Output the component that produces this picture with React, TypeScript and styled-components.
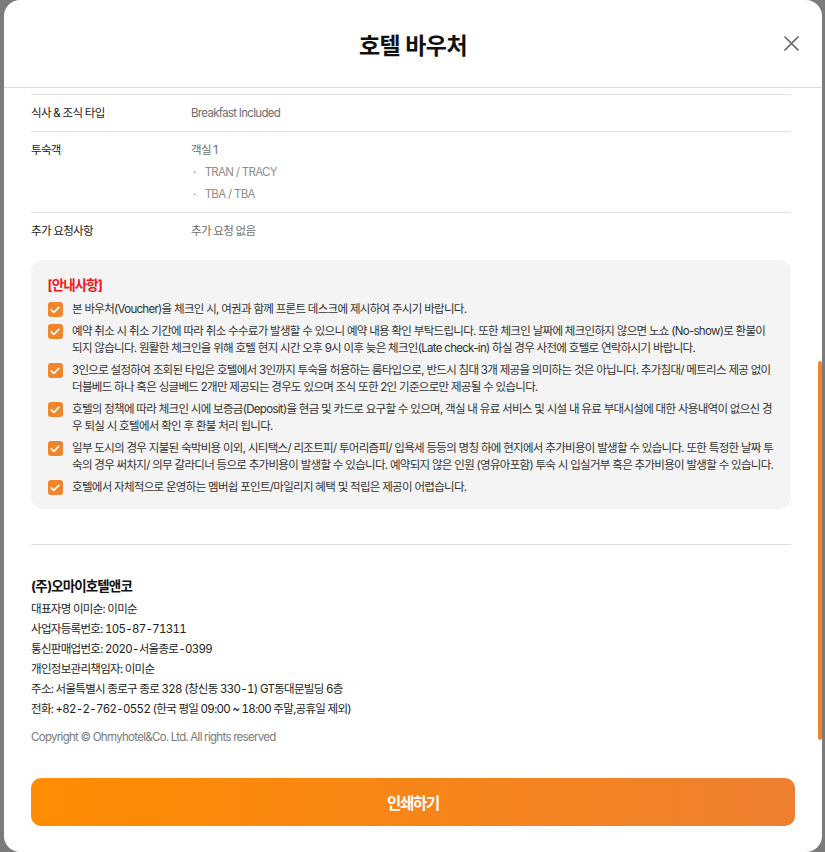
import React, { useLayoutEffect, useRef, useState } from "react";
import styled, { createGlobalStyle } from "styled-components";

const GlobalStyle = createGlobalStyle`
  html, body {
    margin: 0;
    padding: 0;
    height: 100%;
    overflow: hidden;
    background: #7b7b7b;
    font-family: "Inter", "Noto Sans CJK KR", sans-serif;
    letter-spacing: -0.7px;
  }
  #root {
    height: 100%;
  }
  * {
    box-sizing: border-box;
  }
`;

const Backdrop = styled.div`
  height: 100%;
  display: flex;
  justify-content: center;
`;

const Modal = styled.div`
  position: relative;
  width: 818px;
  height: 852px;
  background: #fff;
  border-radius: 16px;
  display: flex;
  flex-direction: column;
  overflow: hidden;
`;

const Header = styled.header`
  height: 88px;
  flex-shrink: 0;
  display: grid;
  grid-template-columns: 1fr auto 1fr;
  align-items: center;
  padding: 0 23px 0 24px;
  border-bottom: 1px solid #dcdcdc;
`;

const Title = styled.h1`
  grid-column: 2;
  margin: 0;
  font-size: 23px;
  font-weight: 700;
  letter-spacing: -0.5px;
  color: #111;
`;

const CloseButton = styled.button`
  justify-self: end;
  width: 15px;
  height: 15px;
  padding: 0;
  border: none;
  background: none;
  cursor: pointer;
  display: flex;

  svg {
    width: 15px;
    height: 15px;
  }
`;

const Scroll = styled.div`
  flex: 1;
  position: relative;
  overflow-y: scroll;
  padding: 0 30.5px 48px 27.5px;

  &::-webkit-scrollbar {
    width: 0;
  }
`;

const ScrollThumb = styled.div`
  position: absolute;
  right: 0;
  width: 4px;
  border-radius: 2px;
  background: #f0852c;
`;

const SectionTitle = styled.h2`
  margin: 24px 0 14px;
  font-size: 15px;
  line-height: 22px;
  font-weight: 700;
  color: #111;
`;

const Row = styled.div`
  display: flex;
  border-top: 1px solid #e2e2e2;
  padding: 10px 0;
  font-size: 11.5px;
  line-height: 16px;
`;

const Label = styled.div`
  width: 160px;
  flex-shrink: 0;
  color: #222;
`;

const Value = styled.div`
  color: #6e6e6e;
  display: flex;
  flex-direction: column;
  gap: 6px;
`;

const Guest = styled.div`
  display: flex;
  gap: 9px;
  color: #8e8e8e;
  padding-left: 2px;
`;

const InfoBox = styled.section`
  margin-top: 11px;
  background: #f4f4f4;
  border-radius: 12px;
  padding: 16px 17px 13px 16.5px;
`;

const InfoTitle = styled.h3`
  margin: 0 0 7px;
  font-size: 13.5px;
  line-height: 18px;
  font-weight: 700;
  color: #f2141c;
  letter-spacing: -0.9px;
`;

const InfoList = styled.ul`
  list-style: none;
  margin: 0;
  padding: 0;
  display: flex;
  flex-direction: column;
  gap: 5px;
`;

const InfoItem = styled.li`
  display: flex;
  gap: 9.5px;
  font-size: 11.5px;
  line-height: 17px;
  color: #333;
`;

const CheckMark = styled.span`
  flex-shrink: 0;
  width: 15px;
  height: 15px;
  margin-top: 1px;
  border-radius: 3px;
  background: #f0852c;
  display: flex;
  align-items: center;
  justify-content: center;
`;

const Divider = styled.hr`
  margin: 35px 0 0;
  border: none;
  border-top: 1px solid #dedede;
`;

const Company = styled.div`
  margin-top: 31px;
  font-size: 11.5px;
  line-height: 20px;
  color: #222;
  font-variant-numeric: tabular-nums;
`;

const CompanyName = styled.div`
  font-size: 13.5px;
  font-weight: 700;
  color: #111;
  letter-spacing: -0.9px;
  margin-bottom: 3px;
`;

const Copyright = styled.div`
  margin-top: 8px;
  color: #7a7a7a;
`;

const Footer = styled.footer`
  flex-shrink: 0;
  padding: 18px 26.5px 26px 27.5px;
`;

const PrintButton = styled.button`
  width: 100%;
  height: 48px;
  border: none;
  border-radius: 10px;
  background: linear-gradient(90deg, #ff8c00 0%, #ee7f30 100%);
  color: #fff;
  font-family: inherit;
  font-size: 15.5px;
  font-weight: 700;
  letter-spacing: -1.2px;
  cursor: pointer;
`;

const bookingRows: [string, string][] = [
  ["예약번호", "OMH240512-001873"],
  ["예약일", "2024-05-12"],
  ["호텔명", "Hotel Nikko Saigon"],
  ["체크인", "2024-06-14 (금) 14:00"],
  ["체크아웃", "2024-06-17 (월) 12:00"],
  ["숙박일수", "3박"],
  ["객실 수", "1"],
  ["객실 타입", "Deluxe Double Room"],
  ["전화번호", "+84-28-3925-7777"],
  ["결제 상태", "결제 완료"],
];

const notices = [
  "본 바우처(Voucher)을 체크인 시, 여권과 함께 프론트 데스크에 제시하여 주시기 바랍니다.",
  "예약 취소 시 취소 기간에 따라 취소 수수료가 발생할 수 있으니 예약 내용 확인 부탁드립니다. 또한 체크인 날짜에 체크인하지 않으면 노쇼 (No-show)로 환불이 되지 않습니다. 원활한 체크인을 위해 호텔 현지 시간 오후 9시 이후 늦은 체크인(Late check-in) 하실 경우 사전에 호텔로 연락하시기 바랍니다.",
  "3인으로 설정하여 조회된 타입은 호텔에서 3인까지 투숙을 허용하는 룸타입으로, 반드시 침대 3개 제공을 의미하는 것은 아닙니다. 추가침대/ 메트리스 제공 없이 더블베드 하나 혹은 싱글베드 2개만 제공되는 경우도 있으며 조식 또한 2인 기준으로만 제공될 수 있습니다.",
  "호텔의 정책에 따라 체크인 시에 보증금(Deposit)을 현금 및 카드로 요구할 수 있으며, 객실 내 유료 서비스 및 시설 내 유료 부대시설에 대한 사용내역이 없으신 경우 퇴실 시 호텔에서 확인 후 환불 처리 됩니다.",
  "일부 도시의 경우 지불된 숙박비용 이외, 시티택스/ 리조트피/ 투어리즘피/ 입욕세 등등의 명칭 하에 현지에서 추가비용이 발생할 수 있습니다. 또한 특정한 날짜 투숙의 경우 써차지/ 의무 갈라디너 등으로 추가비용이 발생할 수 있습니다. 예약되지 않은 인원 (영유아포함) 투숙 시 입실거부 혹은 추가비용이 발생할 수 있습니다.",
  "호텔에서 자체적으로 운영하는 멤버쉽 포인트/마일리지 혜택 및 적립은 제공이 어렵습니다.",
];

const companyLines = [
  "대표자명 이미순: 이미순",
  "사업자등록번호: 105-87-71311",
  "통신판매업번호: 2020-서울종로-0399",
  "개인정보관리책임자: 이미순",
  "주소: 서울특별시 종로구 종로 328 (창신동 330-1) GT동대문빌딩 6층",
  "전화: +82-2-762-0552 (한국 평일 09:00 ~ 18:00 주말,공휴일 제외)",
];

function Check() {
  return (
    <svg width="10" height="8" viewBox="0 0 10 8" fill="none">
      <path d="M1.2 3.9 L3.9 6.4 L8.8 1.4" stroke="#fff" strokeWidth="1.6" strokeLinecap="round" strokeLinejoin="round" />
    </svg>
  );
}

export default function App() {
  const scrollRef = useRef<HTMLDivElement>(null);
  const mealRef = useRef<HTMLDivElement>(null);
  const [thumb, setThumb] = useState({ top: 0, height: 0 });

  // 예약 상세가 스크롤된 상태로 열림
  useLayoutEffect(() => {
    const el = scrollRef.current;
    if (!el || !mealRef.current) return;
    el.scrollTop = mealRef.current.offsetTop - 6;
    const ratio = el.clientHeight / el.scrollHeight;
    setThumb({
      top: el.offsetTop + el.scrollTop * ratio,
      height: el.clientHeight * ratio,
    });
  }, []);

  return (
    <>
      <GlobalStyle />
      <Backdrop>
        <Modal>
          <Header>
            <Title>호텔 바우처</Title>
            <CloseButton aria-label="닫기">
              <svg viewBox="0 0 15 15" fill="none">
                <path d="M1 1 L14 14 M14 1 L1 14" stroke="#666" strokeWidth="1.7" strokeLinecap="round" />
              </svg>
            </CloseButton>
          </Header>

          <Scroll ref={scrollRef}>
            <SectionTitle>예약 정보</SectionTitle>
            {bookingRows.map(([label, value]) => (
              <Row key={label}>
                <Label>{label}</Label>
                <Value>{value}</Value>
              </Row>
            ))}
            <Row>
              <Label>주소</Label>
              <Value>
                <div>235 Nguyen Van Cu Street, District 1</div>
                <div>Ho Chi Minh City, Vietnam</div>
              </Value>
            </Row>
            <Row ref={mealRef}>
              <Label>식사 &amp; 조식 타입</Label>
              <Value>Breakfast Included</Value>
            </Row>
            <Row>
              <Label>투숙객</Label>
              <Value>
                <div>객실 1</div>
                <Guest>
                  <span>·</span>
                  <span>TRAN / TRACY</span>
                </Guest>
                <Guest>
                  <span>·</span>
                  <span>TBA / TBA</span>
                </Guest>
              </Value>
            </Row>
            <Row>
              <Label>추가 요청사항</Label>
              <Value>추가 요청 없음</Value>
            </Row>

            <InfoBox>
              <InfoTitle>[안내사항]</InfoTitle>
              <InfoList>
                {notices.map((text) => (
                  <InfoItem key={text}>
                    <CheckMark>
                      <Check />
                    </CheckMark>
                    <span>{text}</span>
                  </InfoItem>
                ))}
              </InfoList>
            </InfoBox>

            <Divider />

            <Company>
              <CompanyName>(주)오마이호텔앤코</CompanyName>
              {companyLines.map((line) => (
                <div key={line}>{line}</div>
              ))}
              <Copyright>Copyright © Ohmyhotel&amp;Co. Ltd. All rights reserved</Copyright>
            </Company>
          </Scroll>

          {thumb.height > 0 && <ScrollThumb style={{ top: thumb.top, height: thumb.height }} />}

          <Footer>
            <PrintButton>인쇄하기</PrintButton>
          </Footer>
        </Modal>
      </Backdrop>
    </>
  );
}
